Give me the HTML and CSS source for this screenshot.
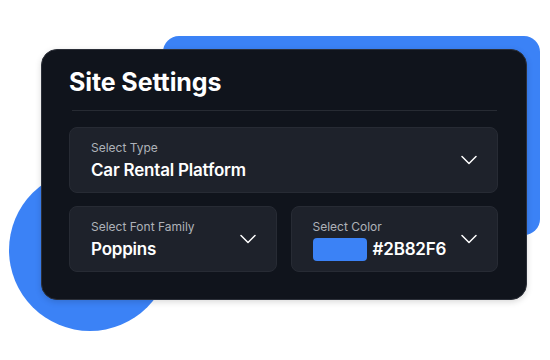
FILE: index.html
```html
<!DOCTYPE html>
<html>
<head>
<meta charset="utf-8">
<link rel="stylesheet" href="styles.css">
</head>
<body>
<div class="stage">
  <div class="blob blob-rect"></div>
  <div class="blob blob-circle"></div>
  <div class="card">
    <h1 class="title">Site Settings</h1>
    <div class="divider"></div>
    <div class="fields">
      <div class="field field-wide">
        <div class="field-text">
          <div class="label">Select Type</div>
          <div class="value">Car Rental Platform</div>
        </div>
        <svg class="chev" width="16" height="10" viewBox="0 0 16 10"><path d="M1 1.5 L8 8.5 L15 1.5" fill="none" stroke="#fff" stroke-width="1.5" stroke-linecap="round" stroke-linejoin="round"/></svg>
      </div>
      <div class="field">
        <div class="field-text">
          <div class="label">Select Font Family</div>
          <div class="value">Poppins</div>
        </div>
        <svg class="chev" width="16" height="10" viewBox="0 0 16 10"><path d="M1 1.5 L8 8.5 L15 1.5" fill="none" stroke="#fff" stroke-width="1.5" stroke-linecap="round" stroke-linejoin="round"/></svg>
      </div>
      <div class="field">
        <div class="field-text">
          <div class="label">Select Color</div>
          <div class="value value-color"><span class="swatch"></span>#2B82F6</div>
        </div>
        <svg class="chev" width="16" height="10" viewBox="0 0 16 10"><path d="M1 1.5 L8 8.5 L15 1.5" fill="none" stroke="#fff" stroke-width="1.5" stroke-linecap="round" stroke-linejoin="round"/></svg>
      </div>
    </div>
  </div>
</div>
</body>
</html>
```
FILE: styles.css
```css
* { box-sizing: border-box; }
html, body { margin: 0; padding: 0; background: #ffffff; }
body { font-family: Inter, "Noto Sans", sans-serif; }
.stage {
  position: relative;
  width: 550px;
  height: 360px;
  overflow: hidden;
  padding: 49px 0 0 41px;
}
.blob { position: absolute; background: #3b82f6; }
.blob-rect {
  left: 163px; top: 36px;
  width: 377px; height: 199px;
  border-radius: 16px;
}
.blob-circle {
  left: 9px; top: 169px;
  width: 162px; height: 162px;
  border-radius: 50%;
}
.card {
  position: relative;
  width: 486px;
  height: 251px;
  background: #10141c;
  border: 1px solid #2b2f38;
  border-radius: 16px;
  padding: 17px 28px 0 27px;
  box-shadow: 0 2px 6px rgba(0,0,0,0.15);
}
.title {
  margin: 0;
  font-size: 25px;
  line-height: 30px;
  font-weight: 700;
  letter-spacing: -0.1px;
  color: #ffffff;
}
.divider {
  height: 1px;
  background: #272b33;
  margin: 13px 1px 16px 3px;
}
.fields {
  display: grid;
  grid-template-columns: 1fr 1fr;
  gap: 13px 14px;
}
.field {
  display: flex;
  align-items: center;
  justify-content: space-between;
  height: 66px;
  background: #1e222b;
  border: 1px solid #272b34;
  border-radius: 8px;
  padding: 0 20px 0 21px;
}
.field-wide { grid-column: 1 / 3; }
.field-text { display: flex; flex-direction: column; }
.label {
  font-size: 12px;
  line-height: 18px;
  color: #aeb2b9;
}
.value {
  margin-top: 2px;
  font-size: 17px;
  line-height: 22px;
  font-weight: 600;
  letter-spacing: -0.2px;
  color: #ffffff;
}
.value-color { display: flex; align-items: center; gap: 6px; }
.swatch {
  display: inline-block;
  width: 54px;
  height: 23px;
  background: #3b82f6;
  border-radius: 4px;
}
.chev { display: block; flex: none; }
```
